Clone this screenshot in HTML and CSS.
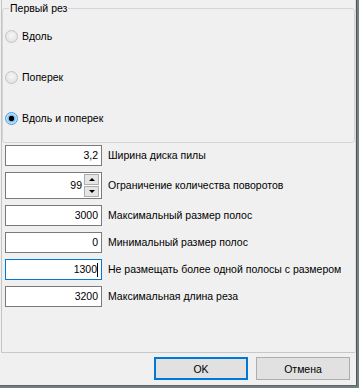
FILE: index.html
```html
<!DOCTYPE html>
<html lang="ru">
  <head>
    <meta charset="UTF-8" />
    <meta name="viewport" content="width=device-width, initial-scale=1.0" />
    <title>Первый рез</title>
    <link rel="stylesheet" href="styles.css">
  </head>
  <body>
    <div class="window">
      <div class="panel">
        <fieldset class="group">
          <legend>Первый рез</legend>
          <label class="radio"><span class="radio-mark"></span>Вдоль</label>
          <label class="radio"><span class="radio-mark"></span>Поперек</label>
          <label class="radio"><span class="radio-mark checked"></span>Вдоль и поперек</label>
        </fieldset>

        <div class="fields">
          <div class="field">
            <div class="edit">3,2</div>
            <span class="caption">Ширина диска пилы</span>
          </div>
          <div class="field">
            <div class="edit spin">
              <span class="spin-value">99</span>
              <span class="spin-buttons">
                <span class="spin-btn up"></span>
                <span class="spin-btn down"></span>
              </span>
            </div>
            <span class="caption">Ограничение количества поворотов</span>
          </div>
          <div class="field">
            <div class="edit">3000</div>
            <span class="caption">Максимальный размер полос</span>
          </div>
          <div class="field">
            <div class="edit">0</div>
            <span class="caption">Минимальный размер полос</span>
          </div>
          <div class="field">
            <div class="edit focused">1300<span class="caret"></span></div>
            <span class="caption">Не размещать более одной полосы с размером</span>
          </div>
          <div class="field">
            <div class="edit">3200</div>
            <span class="caption">Максимальная длина реза</span>
          </div>
        </div>
      </div>

      <div class="buttons">
        <button class="btn default">OK</button>
        <button class="btn">Отмена</button>
      </div>
    </div>
  </body>
</html>
```

FILE: styles.css
```css
html {
  background: #6f7f82;
}

body {
  margin: 0;
  width: 359px;
  height: 388px;
  overflow: hidden;
  font-family: "Liberation Sans", Arial, sans-serif;
  font-size: 10.5px;
  color: #000;
}

.window {
  box-sizing: border-box;
  width: 357px;
  height: 386px;
  background: #f0f0f0;
  border-right: 1px solid #555;
  border-bottom: 1px solid #646464;
  display: flex;
  flex-direction: column;
}

.panel {
  box-sizing: border-box;
  height: 353px;
  margin-left: 1px;
  border-left: 1px solid #c4c4c4;
  border-right: 1px solid #dcdcdc;
  border-bottom: 1px solid #c8c8c8;
  border-bottom-right-radius: 2px;
}

/* group box */
.group {
  box-sizing: border-box;
  height: 141px;
  margin: 2px 0 0 0;
  padding: 15px 0 0 2px;
  border: 1px solid #d5d5d5;
  border-radius: 3px;
  display: flex;
  flex-direction: column;
  gap: 28px;
}

.group legend {
  margin-left: 4px;
  padding: 0 1px;
  line-height: 13px;
}

.radio {
  display: flex;
  align-items: center;
  gap: 4px;
  height: 13px;
  line-height: 13px;
}

.radio-mark {
  box-sizing: border-box;
  width: 13px;
  height: 13px;
  border-radius: 50%;
  border: 1px solid #c3c3c3;
  background: radial-gradient(circle at 50% 40%, #f7f7f7 0, #e4e4e4 70%);
}

.radio-mark.checked {
  border-color: #4a9ad6;
  background: radial-gradient(circle, #000 0, #000 2.5px, #6fb9ee 3px, #bfe3fb 5px, #dff1fd 6px);
}

/* numeric fields */
.fields {
  display: flex;
  flex-direction: column;
  gap: 6px;
  padding: 2px 0 0 3px;
}

.field {
  display: flex;
  align-items: center;
  gap: 6px;
}

.edit {
  box-sizing: border-box;
  width: 97px;
  height: 21px;
  padding-right: 3px;
  border: 1px solid #7a7a7a;
  background: #fff;
  display: flex;
  align-items: center;
  justify-content: flex-end;
  line-height: 13px;
}

.edit.focused {
  border-color: #0078d7;
}

.caret {
  width: 1px;
  height: 14px;
  background: #000;
}

.edit.spin {
  height: 27px;
  padding-right: 2px;
  gap: 2px;
}

.spin-buttons {
  display: flex;
  flex-direction: column;
  gap: 1px;
}

.spin-btn {
  box-sizing: border-box;
  width: 15px;
  height: 11px;
  border: 1px solid #adadad;
  background: #e5e5e5;
  display: flex;
  align-items: center;
  justify-content: center;
}

.spin-btn::before {
  content: "";
  border-left: 3px solid transparent;
  border-right: 3px solid transparent;
}

.spin-btn.up::before {
  border-bottom: 3px solid #000;
}

.spin-btn.down::before {
  border-top: 3px solid #000;
}

.caption {
  line-height: 13px;
  white-space: nowrap;
}

/* dialog buttons */
.buttons {
  display: flex;
  justify-content: flex-end;
  gap: 8px;
  padding: 4px 6px 0 0;
}

.btn {
  box-sizing: border-box;
  width: 94px;
  height: 23px;
  margin: 0;
  padding: 0;
  font: inherit;
  color: #000;
  background: #e1e1e1;
  border: 1px solid #adadad;
}

.btn.default {
  border: 2px solid #0078d7;
}
```
